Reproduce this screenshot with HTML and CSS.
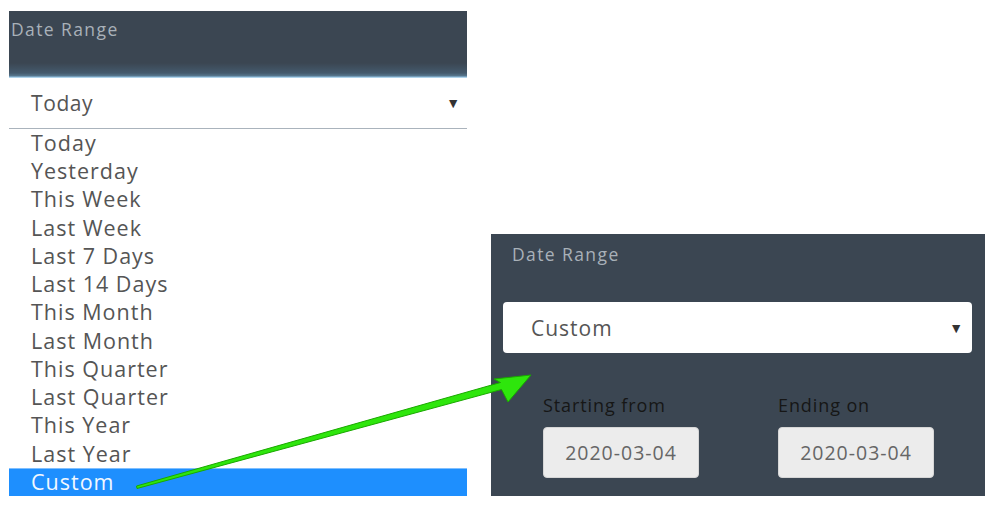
FILE: index.html
```html
<!DOCTYPE html>
<html>
<head>
<meta charset="utf-8">
<link rel="stylesheet" href="styles.css">
</head>
<body>
<div class="page">
  <div class="left">
    <div class="left-head">Date Range</div>
    <div class="left-select"><span>Today</span><span class="caret">▼</span></div>
    <ul class="options">
      <li>Today</li>
      <li>Yesterday</li>
      <li>This Week</li>
      <li>Last Week</li>
      <li>Last 7 Days</li>
      <li>Last 14 Days</li>
      <li>This Month</li>
      <li>Last Month</li>
      <li>This Quarter</li>
      <li>Last Quarter</li>
      <li>This Year</li>
      <li>Last Year</li>
      <li class="selected">Custom</li>
    </ul>
  </div>
  <div class="right">
    <div class="right-head">Date Range</div>
    <div class="right-select"><span>Custom</span><span class="caret">▼</span></div>
    <div class="dates">
      <div class="field">
        <div class="label">Starting from</div>
        <div class="date">2020-03-04</div>
      </div>
      <div class="field">
        <div class="label">Ending on</div>
        <div class="date">2020-03-04</div>
      </div>
    </div>
  </div>
  <svg class="arrow" width="997" height="506" viewBox="0 0 997 506">
    <polygon points="137,488.5 501.5,389.5 508,402 531,375 494,379 500.5,382.5 136.5,486" fill="#2ee60c" stroke="#1aa800" stroke-width="1" stroke-linejoin="round"/>
  </svg>
</div>
</body>
</html>
```

FILE: styles.css
```css
* { box-sizing: border-box; }
html, body { margin: 0; padding: 0; background: #fff; }
body {
  font-family: "Open Sans", "Liberation Sans", sans-serif;
  width: 997px;
  height: 506px;
  overflow: hidden;
}
.page {
  position: relative;
  display: flex;
  align-items: flex-end;
  gap: 24px;
  padding: 11px 12px 10px 9px;
  height: 506px;
}
.left {
  width: 458px;
  display: flex;
  flex-direction: column;
}
.left-head {
  height: 67px;
  background: linear-gradient(to bottom, #3b4652 0px, #3b4652 52px, #445a6d 62px, #58788f 65px, #8fbfe0 66px, #cfe6f5 67px);
  color: #a9b1b9;
  font-size: 17.5px;
  letter-spacing: 1.4px;
  padding: 6px 0 0 2px;
  line-height: 24px;
}
.left-select {
  height: 51px;
  background: #fff;
  border-bottom: 1.5px solid #aab3bc;
  display: flex;
  align-items: center;
  justify-content: space-between;
  padding: 0 7px 0 22px;
  font-size: 21px;
  letter-spacing: 0.6px;
  color: #555;
}
.caret {
  font-size: 14px;
  color: #333;
  letter-spacing: 0;
}
.options {
  list-style: none;
  margin: 0;
  padding: 0;
}
.options li {
  height: 28.25px;
  line-height: 28.25px;
  padding-left: 22px;
  font-size: 21.5px;
  letter-spacing: 1px;
  color: #555;
}
.options li.selected {
  background: #1e8ffe;
  color: #f2f8ff;
  border-top: 1px solid #7fbfff;
  line-height: 26px;
}
.right {
  width: 494px;
  height: 262px;
  background: #3b4652;
  padding: 8px 13px 0 12px;
}
.right-head {
  color: #a9b1b9;
  font-size: 17.5px;
  letter-spacing: 1.4px;
  line-height: 24px;
  padding-left: 9px;
}
.right-select {
  margin-top: 36px;
  height: 51px;
  background: #fff;
  border-radius: 4px;
  display: flex;
  align-items: center;
  justify-content: space-between;
  padding: 0 9px 0 28px;
  font-size: 21px;
  letter-spacing: 1px;
  color: #555;
}
.dates {
  display: grid;
  grid-template-columns: 235px 235px;
  padding-left: 40px;
  margin-top: 40px;
}
.label {
  color: #161616;
  font-size: 18px;
  font-weight: 500;
  letter-spacing: 0.9px;
  line-height: 24px;
}
.date {
  margin-top: 10px;
  width: 156px;
  height: 51px;
  background: #ececec;
  border: 1px solid #d6d6d6;
  border-radius: 4px;
  display: flex;
  align-items: center;
  justify-content: center;
  font-size: 19.5px;
  letter-spacing: 1px;
  color: #666;
}
.arrow {
  position: absolute;
  left: 0;
  top: 0;
  pointer-events: none;
}
```
